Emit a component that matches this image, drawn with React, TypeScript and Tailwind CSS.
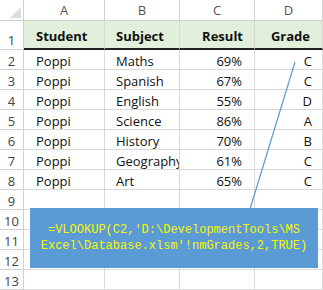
import React from "react";

const rows = [
  ["Poppi", "Maths", "69%", "C"],
  ["Poppi", "Spanish", "67%", "C"],
  ["Poppi", "English", "55%", "D"],
  ["Poppi", "Science", "86%", "A"],
  ["Poppi", "History", "70%", "B"],
  ["Poppi", "Geography", "61%", "C"],
  ["Poppi", "Art", "65%", "C"],
];

const font = { fontFamily: '"Open Sans", "Liberation Sans", sans-serif' };

export default function App() {
  const cellBase =
    "border-r border-b border-[#d9d9d9] text-[13px] leading-[16px] text-[#111] whitespace-nowrap overflow-hidden flex items-end";
  const rowNum =
    "border-r border-b border-[#d0d0d0] text-[13px] leading-[16px] text-[#444] flex items-end justify-center bg-white";
  const head =
    "bg-[#e2efda] border-r border-[#d9d9d9] border-b-2 border-b-[#222] text-[13px] leading-[16px] font-bold text-[#111] flex items-center pt-[3px]";
  return (
    <div className="relative w-[323px] h-[290px] bg-white overflow-hidden" style={font}>
      <div className="grid grid-cols-[24px_81px_75px_75px_68px] grid-rows-[21px_29px_repeat(12,20px)]">
        {/* column header row */}
        <div className="relative border-r border-b border-[#d0d0d0] bg-white">
          <svg className="absolute left-0 top-0" width="24" height="21">
            <polygon points="21,7 21,18 10,18" fill="#dcdcdc" />
          </svg>
        </div>
        {["A", "B", "C", "D"].map((l) => (
          <div
            key={l}
            className="border-r border-b border-[#d0d0d0] text-[13px] leading-[16px] text-[#555] flex items-center justify-center bg-white"
          >
            {l}
          </div>
        ))}

        {/* row 1 */}
        <div className={`${rowNum} pb-[1px]`}>1</div>
        <div className={`${head} pl-[12px]`}>Student</div>
        <div className={`${head} pl-[11px]`}>Subject</div>
        <div className={`${head} justify-end pr-[11px]`}>Result</div>
        <div className={`${head} justify-center pl-[4px]`}>Grade</div>

        {rows.map((r, i) => (
          <React.Fragment key={i}>
            <div className={rowNum}>{i + 2}</div>
            <div className={`${cellBase} pl-[12px]`}>{r[0]}</div>
            <div className={`${cellBase} pl-[11px]`}>{r[1]}</div>
            <div className={`${cellBase} justify-end pr-[12px]`}>{r[2]}</div>
            <div className={`${cellBase} justify-end pr-[10px]`}>{r[3]}</div>
          </React.Fragment>
        ))}

        {[9, 10, 11, 12, 13].map((n) => (
          <React.Fragment key={n}>
            <div className={rowNum}>{n}</div>
            <div className={cellBase}></div>
            <div className={cellBase}></div>
            <div className={cellBase}></div>
            <div className={cellBase}></div>
          </React.Fragment>
        ))}
      </div>

      {/* callout line */}
      <svg className="absolute left-0 top-0 pointer-events-none" width="323" height="290">
        <line x1="295" y1="62" x2="250" y2="209" stroke="#5b9bd5" strokeWidth="1.2" />
      </svg>

      {/* callout box */}
      <div
        className="absolute left-[30px] top-[208px] w-[288px] h-[60px] bg-[#5b9bd5] flex flex-col items-center justify-center text-[12px] leading-[16px] text-[#f7f700]"
        style={{ fontFamily: '"Liberation Mono", "DejaVu Sans Mono", monospace' }}
      >
        <div>=VLOOKUP(C2,'D:\DevelopmentTools\MS</div>
        <div>Excel\Database.xlsm'!nmGrades,2,TRUE)</div>
      </div>
    </div>
  );
}
